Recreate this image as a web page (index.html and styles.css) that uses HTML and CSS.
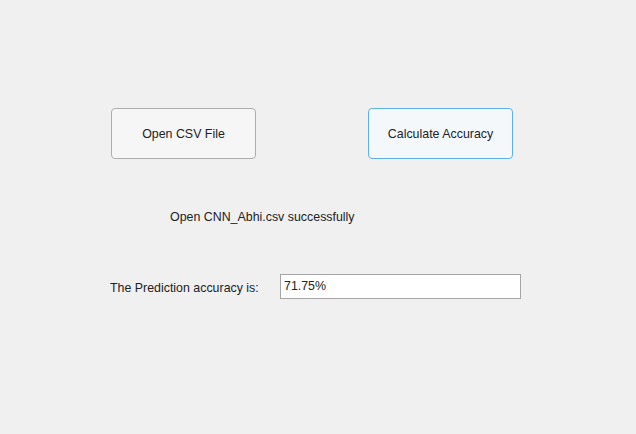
FILE: index.html
```html
<!DOCTYPE html>
<html>
<head>
<meta charset="utf-8">
<link rel="stylesheet" href="styles.css">
</head>
<body>
<div class="app">
  <div class="buttons">
    <button class="btn">Open CSV File</button>
    <button class="btn btn-focus">Calculate Accuracy</button>
  </div>
  <div class="status">Open CNN_Abhi.csv successfully</div>
  <div class="result">
    <span class="label">The Prediction accuracy is:</span>
    <div class="field">71.75%</div>
  </div>
</div>
</body>
</html>
```
FILE: styles.css
```css
html, body {
  margin: 0;
  padding: 0;
  background: #f0f0f0;
  width: 636px;
  height: 434px;
  overflow: hidden;
}
.app {
  font-family: "Liberation Sans", Arial, sans-serif;
  font-size: 12.4px;
  color: #222222;
  padding-top: 108px;
  display: flex;
  flex-direction: column;
}
.buttons {
  display: flex;
  gap: 112px;
  padding-left: 111px;
}
.btn {
  width: 145px;
  height: 51px;
  box-sizing: border-box;
  border: 1px solid #adadad;
  border-radius: 4px;
  background: #f6f6f6;
  font-family: inherit;
  font-size: inherit;
  color: #222222;
  padding: 0;
}
.btn-focus {
  border-color: #5fb0e4;
  background: #f5f8fb;
}
.status {
  margin-top: 50px;
  padding-left: 170px;
  height: 16px;
  line-height: 16px;
}
.result {
  margin-top: 49px;
  display: flex;
  align-items: center;
  padding-left: 110px;
  gap: 20px;
}
.label {
  width: 150px;
  line-height: 16px;
  padding-top: 2px;
}
.field {
  width: 241px;
  height: 25px;
  box-sizing: border-box;
  border: 1px solid #a6a6a6;
  background: #ffffff;
  padding-left: 3px;
  line-height: 22px;
}
```
